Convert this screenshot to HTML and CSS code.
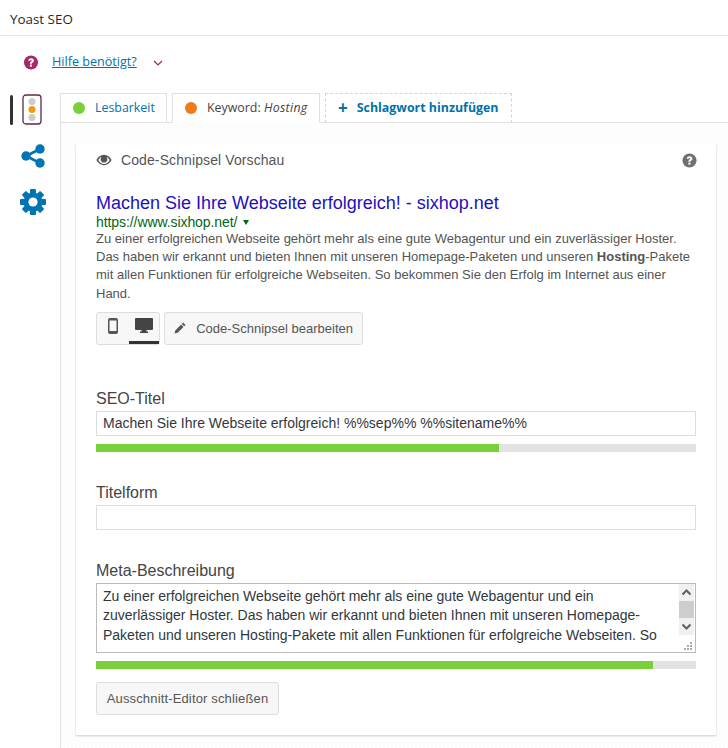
FILE: index.html
```html
<!DOCTYPE html>
<html lang="de">
<head>
<meta charset="utf-8">
<title>Yoast SEO</title>
<link rel="stylesheet" href="styles.css">
</head>
<body>
<header class="box-title">Yoast SEO</header>
<div class="help-row">
  <svg class="help-icon" viewBox="0 0 16 16"><circle cx="8" cy="8" r="7.500" fill="#a4286a"/><path d="M5 6.200C5.100 4.400 6.400 3.400 8.100 3.400c1.800 0 3 1 3 2.400 0 1.100-.7 1.700-1.300 2.100-.6.4-.8.7-.8 1.300H6.900c0-1.200.4-1.800 1.100-2.200.5-.3.800-.6.800-1 0-.5-.3-.8-.8-.8s-.8.3-.9 1z" fill="#fff"/><rect x="6.800" y="10.200" width="2.200" height="2.200" fill="#fff"/></svg>
  <a class="help-link" href="#">Hilfe benötigt?</a>
  <svg class="help-chevron" viewBox="0 0 10 6"><path d="M1 1l4 4 4-4" fill="none" stroke="#a4286a" stroke-width="1.200"/></svg>
</div>
<div class="metabox">
  <nav class="side">
    <div class="side-item side-active">
      <svg class="light" viewBox="0 0 20 31"><rect x="1" y="1" width="18" height="29" rx="3" fill="#fff" stroke="#5b2a4a" stroke-width="1.300"/><circle cx="10" cy="7.500" r="3.500" fill="#ccc"/><circle cx="10" cy="15.500" r="3.500" fill="#f39a0d"/><circle cx="10" cy="23.500" r="3.500" fill="#ccc"/></svg>
    </div>
    <div class="side-item side-share">
      <svg class="share" viewBox="0 0 24 24"><path d="M19 5L5 12l14 7" fill="none" stroke="#0075b3" stroke-width="2.600"/><circle cx="19" cy="5" r="4.700" fill="#0075b3"/><circle cx="5" cy="12" r="4.700" fill="#0075b3"/><circle cx="19" cy="19" r="4.700" fill="#0075b3"/></svg>
    </div>
    <div class="side-item side-gear">
      <svg class="gear" viewBox="0 0 26 26"><g fill="#0075b3"><circle cx="13" cy="13" r="9.500"/><rect x="10" y="0" width="6" height="26" rx="1"/><rect x="10" y="0" width="6" height="26" rx="1" transform="rotate(45 13 13)"/><rect x="10" y="0" width="6" height="26" rx="1" transform="rotate(90 13 13)"/><rect x="10" y="0" width="6" height="26" rx="1" transform="rotate(135 13 13)"/></g><circle cx="13" cy="13" r="4.600" fill="#fff"/></svg>
    </div>
  </nav>
  <div class="main">
    <div class="tabs">
      <div class="tab tab-read"><span class="dot dot-green"></span><span class="tab-link">Lesbarkeit</span></div>
      <div class="tab tab-active"><span class="dot dot-orange"></span><span>Keyword: <em>Hosting</em></span></div>
      <div class="tab tab-add"><span class="plus">+</span><span>Schlagwort hinzufügen</span></div>
    </div>
    <div class="panel">
      <section class="card">
        <div class="card-head">
          <svg class="eye" viewBox="0 0 16 12"><path d="M8 .8C4.700.8 2 2.900.4 6c1.600 3.100 4.300 5.200 7.600 5.200s6-2.100 7.600-5.200C14 2.900 11.300.8 8 .8zm0 9.200C5.700 10 3.600 8.400 2.300 6 3.300 4.300 4.400 3.300 5.600 2.700 5 3.400 4.600 4.200 4.600 5.200 4.600 7.100 6.100 8.600 8 8.600s3.400-1.500 3.400-3.400c0-1-.4-1.800-1-2.500 1.200.6 2.300 1.600 3.300 3.300C12.400 8.400 10.300 10 8 10z" fill="#555"/></svg>
          <span class="card-title">Code-Schnipsel Vorschau</span>
          <svg class="q-icon" viewBox="0 0 16 16"><circle cx="8" cy="8" r="7.500" fill="#707070"/><path d="M5 6.200C5.100 4.400 6.400 3.400 8.100 3.400c1.800 0 3 1 3 2.400 0 1.100-.7 1.700-1.300 2.100-.6.4-.8.7-.8 1.300H6.900c0-1.200.4-1.800 1.100-2.200.5-.3.800-.6.800-1 0-.5-.3-.8-.8-.8s-.8.3-.9 1z" fill="#fff"/><rect x="6.800" y="10.200" width="2.200" height="2.200" fill="#fff"/></svg>
        </div>
        <a class="snip-title" href="#">Machen Sie Ihre Webseite erfolgreich! - sixhop.net</a>
        <div class="snip-url">https://www.sixhop.net/<span class="url-caret"></span></div>
        <p class="snip-desc">Zu einer erfolgreichen Webseite gehört mehr als eine gute Webagentur und ein zuverlässiger Hoster. Das haben wir erkannt und bieten Ihnen mit unseren Homepage-Paketen und unseren <b>Hosting</b>-Pakete mit allen Funktionen für erfolgreiche Webseiten. So bekommen Sie den Erfolg im Internet aus einer Hand.</p>
        <div class="snip-actions">
          <div class="btn-group">
            <span class="mode">
              <svg class="phone" viewBox="0 0 10 16"><path d="M2 0h6a2 2 0 0 1 2 2v12a2 2 0 0 1-2 2H2a2 2 0 0 1-2-2V2a2 2 0 0 1 2-2zm-.5 2.500v10.500h7V2.500z" fill="#555"/></svg>
            </span>
            <span class="mode mode-on">
              <svg class="desk" viewBox="0 0 18 16"><path d="M1 0h16a1 1 0 0 1 1 1v10a1 1 0 0 1-1 1h-5.500v1.500H13V15H5v-1.500h1.500V12H1a1 1 0 0 1-1-1V1a1 1 0 0 1 1-1z" fill="#444"/></svg>
            </span>
          </div>
          <button class="btn btn-edit" type="button">
            <svg class="pencil" viewBox="0 0 14 14"><path d="M10.500.8l2.700 2.700-1.500 1.500L9 2.300zM8.200 3.100l2.700 2.700-6.700 6.700L.6 13.400l.9-3.600z" fill="#555"/></svg>
            <span>Code-Schnipsel bearbeiten</span>
          </button>
        </div>

        <label class="field-label field-first">SEO-Titel</label>
        <input class="field" type="text" value="Machen Sie Ihre Webseite erfolgreich! %%sep%% %%sitename%%">
        <div class="bar"><div class="bar-fill" style="width:67.2%"></div></div>

        <label class="field-label field-second">Titelform</label>
        <input class="field" type="text">

        <label class="field-label field-third">Meta-Beschreibung</label>
        <div class="area-box">
          <textarea class="field-area">Zu einer erfolgreichen Webseite gehört mehr als eine gute Webagentur und ein zuverlässiger Hoster. Das haben wir erkannt und bieten Ihnen mit unseren Homepage-Paketen und unseren Hosting-Pakete mit allen Funktionen für erfolgreiche Webseiten. So bekommen Sie den Erfolg im Internet aus einer Hand.</textarea>
          <div class="scroll">
            <svg class="scroll-btn" viewBox="0 0 15 17"><path d="M3.500 10.500l4-4 4 4" fill="none" stroke="#606060" stroke-width="2"/></svg>
            <div class="scroll-thumb"></div>
            <svg class="scroll-btn" viewBox="0 0 15 17"><path d="M3.500 6.500l4 4 4-4" fill="none" stroke="#606060" stroke-width="2"/></svg>
          </div>
          <svg class="grip" viewBox="0 0 9 8"><g fill="#aaa"><rect x="6" y="0" width="2" height="2"/><rect x="3" y="3" width="2" height="2"/><rect x="6" y="3" width="2" height="2"/><rect x="0" y="6" width="2" height="2"/><rect x="3" y="6" width="2" height="2"/><rect x="6" y="6" width="2" height="2"/></g></svg>
        </div>
        <div class="bar"><div class="bar-fill" style="width:92.8%"></div></div>

        <button class="btn btn-close" type="button">Ausschnitt-Editor schließen</button>
      </section>
    </div>
  </div>
</div>
</body>
</html>
```
FILE: styles.css
```css
* { box-sizing: border-box; }
html, body { margin: 0; padding: 0; }
body {
  width: 728px;
  height: 748px;
  overflow: hidden;
  background: #fff;
  font-family: "Open Sans", "Liberation Sans", sans-serif;
  color: #444;
}
.box-title {
  height: 36px;
  padding: 9px 0 0 10px;
  font-size: 13.400px;
  line-height: 20px;
  color: #23282d;
  border-bottom: 1px solid #e5e5e5;
}
.help-row {
  height: 57px;
  padding: 0 0 4px 23px;
  display: flex;
  align-items: center;
}
.help-icon { width: 16px; height: 15px; }
.help-link {
  margin-left: 13px;
  margin-bottom: 2px;
  font-size: 12.600px;
  color: #0073aa;
}
.help-chevron { width: 10px; height: 6px; margin-left: 16px; }
.metabox { display: flex; height: 655px; }
.side { width: 60px; flex: none; display: flex; flex-direction: column; }
.side-item { display: flex; justify-content: center; height: 45px; padding-left: 5px; }
.side-active { position: relative; height: 47px; padding-top: 1px; padding-left: 4px; }
.side-active::before {
  content: "";
  position: absolute;
  left: 10px;
  top: 2px;
  width: 3px;
  height: 30px;
  background: #333;
  border-radius: 2px;
}
.side-share { height: 49px; }
.side-gear { padding-left: 5px; }
.light { width: 20px; height: 31px; }
.share { width: 24px; height: 24px; margin-top: 4px; }
.gear { width: 26px; height: 26px; }
.main { flex: 1; min-width: 0; display: flex; flex-direction: column; }
.tabs { display: flex; gap: 5px; height: 30px; position: relative; z-index: 1; }
.tab {
  height: 30px;
  display: flex;
  align-items: center;
  padding: 0 0 1px 12px;
  background: #fff;
  border: 1px solid #e0e0e0;
  font-size: 12.400px;
  color: #444;
}
.tab-read { width: 107px; }
.tab-link { color: #0073aa; }
.tab-active { width: 148px; border-bottom-color: #fdfdfd; }
.tab-active em { letter-spacing: .3px; }
.tab-add {
  width: 187px;
  border: 1px dashed #d5d5d5;
  border-bottom: 1px solid #e0e0e0;
  color: #0073aa;
  font-weight: 700;
}
.plus { font-size: 17px; line-height: 1; margin-right: 9px; font-weight: 700; }
.dot { width: 12px; height: 12px; border-radius: 50%; margin-right: 10px; }
.dot-green { background: #7ad03a; }
.dot-orange { background: #ee7c1b; }
.panel {
  flex: 1;
  margin-top: -1px;
  border-top: 1px solid #e0e0e0;
  border-left: 1px solid #e0e0e0;
  padding: 20px 12px 0 15px;
  background: repeating-conic-gradient(#fbfbfb 0 25%, #fff 0 50%) 0 0 / 4px 4px;
}
.card {
  height: 592px;
  padding: 0 20px;
  background: #fff;
  box-shadow: 0 1px 2px rgba(0,0,0,.2);
  font-family: "Liberation Sans", Arial, sans-serif;
  display: flex;
  flex-direction: column;
  align-items: flex-start;
}
.card-head { width: 100%; height: 35px; display: flex; align-items: center; padding-bottom: 1px; }
.eye { width: 16px; height: 12px; margin-right: 9px; }
.card-title { font-size: 14px; letter-spacing: .1px; color: #555; }
.q-icon { width: 15px; height: 15px; margin-left: auto; margin-right: -1px; }
.snip-title {
  margin-top: 15px;
  font-size: 18px;
  line-height: 21px;
  color: #1e0fbe;
  text-decoration: none;
}
.snip-url {
  font-size: 14px;
  line-height: 16px;
  letter-spacing: -.08px;
  color: #006621;
  display: flex;
  align-items: center;
}
.url-caret {
  width: 0; height: 0;
  margin-left: 6px;
  border-left: 3.500px solid transparent;
  border-right: 3.500px solid transparent;
  border-top: 5px solid #006621;
}
.snip-desc {
  margin: 0;
  font-size: 13px;
  line-height: 18.200px;
  color: #545454;
}
.snip-actions { display: flex; gap: 4px; margin-top: 9px; }
.btn-group {
  width: 64px;
  height: 33px;
  display: flex;
  padding-left: 1px;
  background: #f7f7f7;
  border: 1px solid #ddd;
  border-radius: 3px;
}
.mode { width: 31px; display: flex; justify-content: center; padding-top: 5px; height: 31px; }
.phone { width: 10px; height: 16px; }
.mode-on { border-bottom: 3px solid #333; height: 31px; }
.desk { width: 18px; height: 16px; }
.btn {
  height: 33px;
  font-family: "Liberation Sans", Arial, sans-serif;
  font-size: 13px;
  color: #555;
  background: #f7f7f7;
  border: 1px solid #ddd;
  border-radius: 3px;
  white-space: nowrap;
}
.btn-edit { display: flex; align-items: center; width: 199px; padding: 0 9px; }
.pencil { width: 14px; height: 14px; margin-right: 10px; }
.field-label { font-size: 16px; line-height: 18px; color: #444; margin-bottom: 3px; }
.field-first { margin-top: 45px; }
.field-second { margin-top: 32px; }
.field-third { margin-top: 32px; }
.field {
  width: 600px;
  height: 25px;
  padding: 0 6px;
  border: 1px solid #ddd;
  font: 14px "Liberation Sans", Arial, sans-serif;
  color: #32373c;
  outline: none;
  background: #fff;
}
.bar { width: 600px; height: 8px; margin-top: 8px; background: #e2e2e2; }
.bar-fill { height: 100%; background: #7ad03a; }
.area-box {
  position: relative;
  display: flex;
  align-items: flex-start;
  width: 600px;
  height: 70px;
  background: #fff;
  border: 1px solid #bbb;
}
.field-area {
  display: block;
  flex: none;
  width: 582px;
  height: 61px;
  padding: 3px 0 0 6px;
  border: 0;
  font: 14px/19.500px "Liberation Sans", Arial, sans-serif;
  color: #32373c;
  outline: none;
  overflow: hidden;
  resize: none;
  background: #fff;
}
.scroll { width: 15px; display: flex; flex-direction: column; background: #f0f0f0; }
.scroll-btn { display: block; width: 15px; height: 17px; }
.scroll-thumb { height: 17px; background: #cdcdcd; }
.grip { position: absolute; right: 2px; bottom: 2px; width: 9px; height: 8px; }
.btn-close { margin-top: 13px; width: 183px; padding: 0; letter-spacing: .15px; }
```
